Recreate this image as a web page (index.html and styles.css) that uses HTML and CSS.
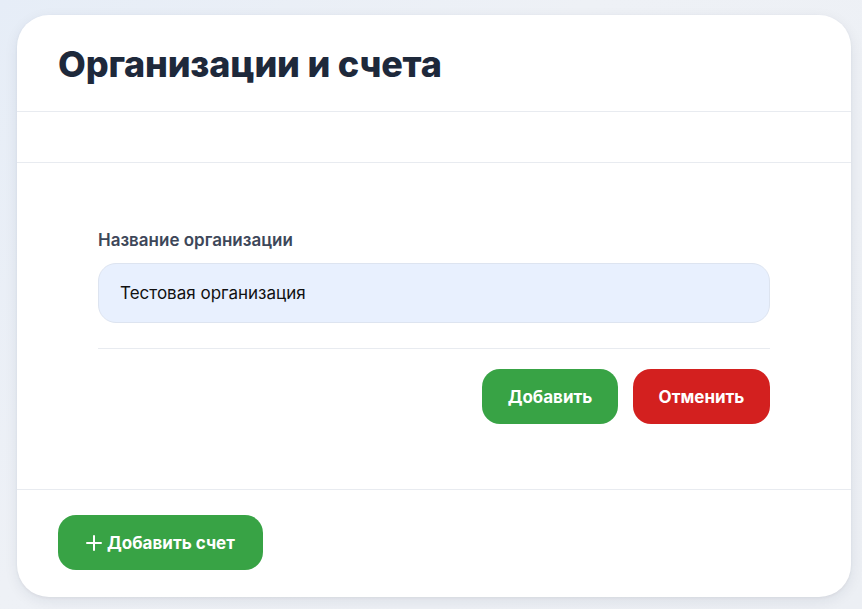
FILE: index.html
```html
<!DOCTYPE html>
<html lang="ru">
<head>
<meta charset="utf-8">
<link rel="stylesheet" href="styles.css">
</head>
<body>
<div class="page">
  <div class="card">
    <div class="card-header">
      <h1 class="title">Организации и счета</h1>
    </div>
    <div class="card-strip"></div>
    <div class="card-form">
      <div class="form">
        <label class="label" for="org">Название организации</label>
        <input class="input" id="org" type="text" value="Тестовая организация">
        <div class="form-divider"></div>
        <div class="actions">
          <button class="btn btn-green">Добавить</button>
          <button class="btn btn-red">Отменить</button>
        </div>
      </div>
    </div>
    <div class="card-footer">
      <button class="btn btn-green btn-add"><svg class="plus" viewBox="0 0 16 16" width="16" height="16"><path d="M8 1v14M1 8h14" stroke="#fff" stroke-width="2" stroke-linecap="round" fill="none"/></svg>Добавить счет</button>
    </div>
  </div>
</div>
</body>
</html>
```
FILE: styles.css
```css
* { box-sizing: border-box; }
html, body { margin: 0; padding: 0; }
body {
  font-family: Inter, "Noto Sans", sans-serif;
  background: linear-gradient(135deg, #e6edf7 0%, #eef1f6 40%, #eceff4 100%);
  width: 862px;
  height: 609px;
  overflow: hidden;
}
.page {
  padding: 15px 12px 0 17px;
}
.card {
  width: 834px;
  height: 582px;
  background: #fff;
  border-radius: 32px;
  box-shadow: 0 4px 14px rgba(30, 41, 59, 0.08), 0 1px 3px rgba(30, 41, 59, 0.06);
  display: flex;
  flex-direction: column;
  overflow: hidden;
}
.card-header {
  height: 97px;
  padding: 0 41px;
  display: flex;
  align-items: center;
  border-bottom: 1px solid #e8ebf0;
}
.title {
  margin: 0;
  font-size: 36px;
  font-weight: 800;
  color: #1e293b;
  letter-spacing: -0.2px;
  line-height: 1;
  padding-top: 1px;
}
.card-strip {
  height: 51px;
  border-bottom: 1px solid #e8ebf0;
}
.card-form {
  height: 327px;
  padding: 67px 81px 0 81px;
  border-bottom: 1px solid #e8ebf0;
}
.form {
  display: flex;
  flex-direction: column;
}
.label {
  font-size: 17px;
  font-weight: 600;
  color: #3d4759;
  line-height: 21px;
  margin-bottom: 12px;
}
.input {
  height: 60px;
  border: 1px solid #dde4f0;
  background: #e8f0fe;
  border-radius: 18px;
  padding: 0 21px;
  font-family: inherit;
  font-size: 17px;
  color: #111;
  outline: none;
}
.form-divider {
  height: 1px;
  background: #e8ebf0;
  margin: 25px 0 20px;
}
.actions {
  display: flex;
  justify-content: flex-end;
  gap: 15px;
}
.btn {
  border: none;
  height: 55px;
  border-radius: 18px;
  color: #fff;
  font-family: inherit;
  font-size: 17px;
  font-weight: 700;
  display: inline-flex;
  align-items: center;
  justify-content: center;
  cursor: pointer;
}
.btn-green { background: #38a345; width: 136px; }
.btn-red { background: #d3201f; width: 137px; }
.card-footer {
  padding: 25px 41px 0;
}
.btn-add {
  width: 205px;
  gap: 5px;
}
.plus { display: block; }
```
